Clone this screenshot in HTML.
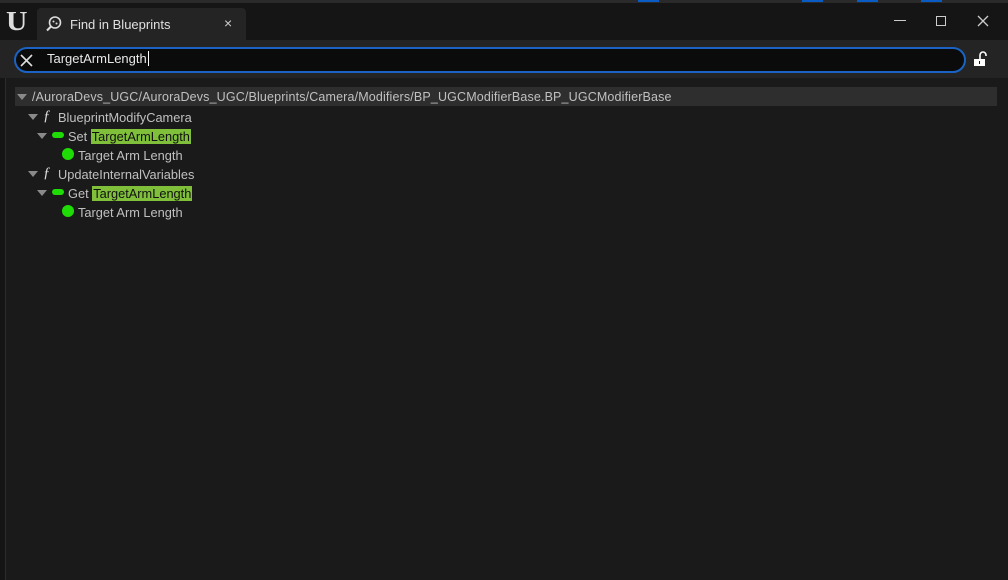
<!DOCTYPE html>
<html><head><meta charset="utf-8"><style>
*{margin:0;padding:0;box-sizing:border-box}
body{width:1008px;height:580px;background:#151515;font-family:"Liberation Sans",sans-serif;color:#c0c0c0;position:relative;overflow:hidden}
.a{position:absolute}
.t{font-size:12.5px;white-space:nowrap;line-height:19px}
.hl{background:#7fbf3a;color:#111;padding:0 1px}
.tri{width:0;height:0;border-left:5px solid transparent;border-right:5px solid transparent;border-top:6px solid #8a8a8a}
.dot{width:12px;height:12px;border-radius:50%;background:#1fdc06}
.pill{width:12px;height:6px;border-radius:3px;background:#1fdc06}
.f{font-family:"Liberation Serif",serif;font-style:italic;font-size:15px;color:#ddd}
</style></head><body>
<div class="a" style="left:0;top:0;width:1008px;height:3px;background:#2a2a2a"></div>
<div class="a" style="left:638px;top:0;width:21px;height:2px;background:#0a5bc4"></div>
<div class="a" style="left:802px;top:0;width:21px;height:2px;background:#0a5bc4"></div>
<div class="a" style="left:857px;top:0;width:21px;height:2px;background:#0a5bc4"></div>
<div class="a" style="left:921px;top:0;width:21px;height:2px;background:#0a5bc4"></div>
<div class="a" style="left:0;top:3px;width:1008px;height:577px;background:#151515"></div>
<div class="a" style="left:7px;top:7px;font-family:'Liberation Serif',serif;font-weight:bold;font-size:27px;color:#ddd;line-height:28px;transform:scaleX(1.1)">U</div>
<div class="a" style="left:37px;top:8px;width:209px;height:32px;background:#242424;border-radius:4px 4px 0 0"></div>
<svg class="a" style="left:45px;top:15px" width="18" height="18" viewBox="0 0 18 18"><circle cx="10" cy="7.5" r="5.5" fill="none" stroke="#ddd" stroke-width="1.6"/><line x1="6" y1="11.5" x2="2" y2="15.5" stroke="#ddd" stroke-width="2"/><circle cx="8.5" cy="6.5" r="1" fill="#ddd"/><circle cx="11.5" cy="8.5" r="1" fill="#ddd"/></svg>
<div class="a t" style="left:70px;top:15px;font-size:13px;color:#e0e0e0">Find in Blueprints</div>
<div class="a t" style="left:224px;top:14px;font-size:14px;color:#ccc">×</div>
<div class="a" style="left:894px;top:20px;width:12px;height:1px;background:#ccc"></div>
<div class="a" style="left:936px;top:16px;width:10px;height:10px;border:1px solid #ccc"></div>
<svg class="a" style="left:977px;top:15px" width="12" height="12"><path d="M1 1L11 11M11 1L1 11" stroke="#ccc" stroke-width="1.3"/></svg>
<div class="a" style="left:0;top:40px;width:1008px;height:38px;background:#242424"></div>
<div class="a" style="left:14px;top:47px;width:952px;height:26px;background:#0b0b0b;border:2px solid #1a63c2;border-radius:13px"></div>
<svg class="a" style="left:20px;top:54px" width="13" height="13"><path d="M1 1L12 12M12 1L1 12" stroke="#ddd" stroke-width="1.6"/></svg>
<div class="a t" style="left:47px;top:49px;font-size:13px;color:#e8e8e8">TargetArmLength<span style="border-left:1px solid #fff;margin-left:1px"></span></div>
<svg class="a" style="left:972px;top:50px" width="18" height="18"><path d="M8 9V5a3 3 0 0 1 6 0v1" fill="none" stroke="#fff" stroke-width="1.6"/><rect x="2" y="9" width="11" height="7" fill="#fff"/><rect x="7" y="11" width="1" height="3" fill="#111"/></svg>
<div class="a" style="left:5px;top:78px;width:1003px;height:502px;background:#1a1a1a;border-left:1px solid #2c2c2c"></div>
<div class="a" style="left:15px;top:87px;width:982px;height:19px;background:#2e2e2e"></div>
<div class="a tri" style="left:17px;top:94px"></div>
<div class="a t" style="left:32px;top:88px;letter-spacing:0.15px">/AuroraDevs_UGC/AuroraDevs_UGC/Blueprints/Camera/Modifiers/BP_UGCModifierBase.BP_UGCModifierBase</div>
<div class="a tri" style="left:28px;top:114px"></div>
<div class="a f" style="left:43px;top:108px">ƒ</div>
<div class="a t" style="left:58px;top:108px;font-size:12.8px">BlueprintModifyCamera</div>
<div class="a tri" style="left:37px;top:133px"></div>
<div class="a pill" style="left:52px;top:132px"></div>
<div class="a t" style="left:68px;top:127px;font-size:12.8px">Set <span class="hl">TargetArmLength</span></div>
<div class="a dot" style="left:62px;top:148px"></div>
<div class="a t" style="left:78px;top:146px;font-size:12.8px">Target Arm Length</div>
<div class="a tri" style="left:28px;top:171px"></div>
<div class="a f" style="left:43px;top:165px">ƒ</div>
<div class="a t" style="left:58px;top:165px;font-size:12.8px">UpdateInternalVariables</div>
<div class="a tri" style="left:37px;top:190px"></div>
<div class="a pill" style="left:52px;top:189px"></div>
<div class="a t" style="left:68px;top:184px;font-size:12.8px">Get <span class="hl">TargetArmLength</span></div>
<div class="a dot" style="left:62px;top:205px"></div>
<div class="a t" style="left:78px;top:203px;font-size:12.8px">Target Arm Length</div>
</body></html>
